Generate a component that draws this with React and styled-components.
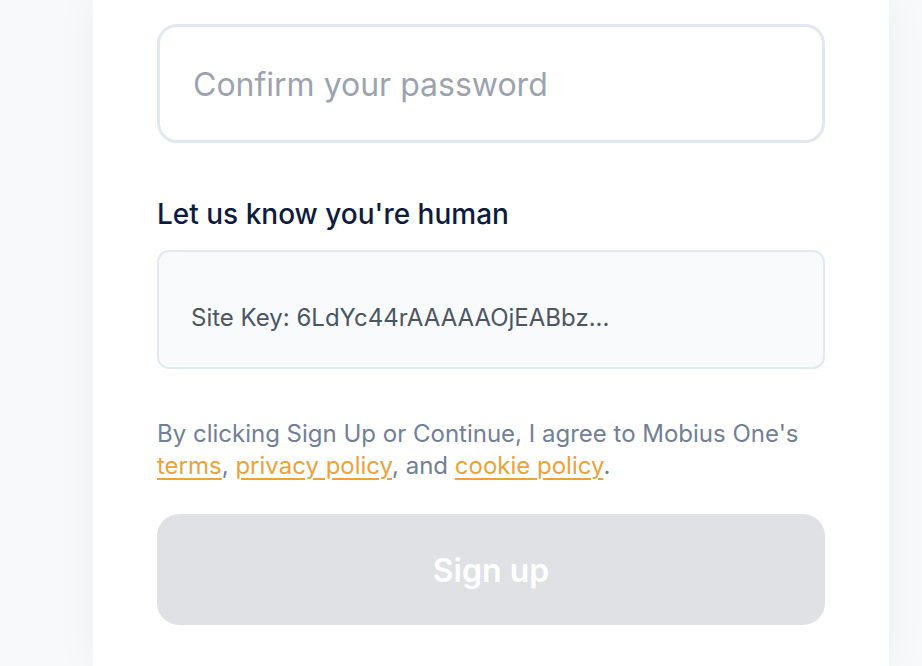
import React from "react";
import styled, { createGlobalStyle } from "styled-components";

const Global = createGlobalStyle`
  html, body { margin: 0; padding: 0; }
  body {
    background: #f8f9fb;
    font-family: Inter, "Noto Sans", sans-serif;
    -webkit-font-smoothing: antialiased;
  }
`;

const Page = styled.div`
  display: flex;
  height: 666px;
  overflow: hidden;
  padding-left: 93px;
  padding-right: 33px;
  box-sizing: border-box;
`;

const Card = styled.div`
  flex: 1;
  background: #ffffff;
  box-shadow: 0 0 40px rgba(15, 23, 42, 0.05);
  padding: 24px 64px 0 64px;
  display: flex;
  flex-direction: column;
  box-sizing: border-box;
`;

const Input = styled.input`
  height: 119px;
  flex-shrink: 0;
  box-sizing: border-box;
  border: 3px solid #e2e8f0;
  border-radius: 20px;
  padding: 2px 33px 0 33px;
  font-family: Inter, sans-serif;
  font-size: 32px;
  color: #111827;
  background: #fff;
  outline: none;
  &::placeholder { color: #9ca3af; }
`;

const Label = styled.div`
  margin-top: 55px;
  font-size: 28px;
  line-height: 32px;
  font-weight: 500;
  color: #0f1b3d;
`;

const Captcha = styled.div`
  margin-top: 20px;
  height: 119px;
  flex-shrink: 0;
  box-sizing: border-box;
  border: 2px solid #e2e8f0;
  border-radius: 12px;
  background: #f9fafc;
  padding: 16px 32px 0 32px;
  display: flex;
  align-items: center;
  font-size: 24px;
  color: #4b5563;
`;

const Terms = styled.p`
  margin: 49px 0 0 0;
  font-size: 24px;
  line-height: 32px;
  color: #718096;
`;

const Link = styled.a`
  color: #eba23c;
  text-decoration: underline;
  text-underline-offset: 4px;
  text-decoration-thickness: 1.5px;
`;

const Button = styled.button`
  margin-top: 32px;
  height: 111px;
  flex-shrink: 0;
  border: none;
  border-radius: 22px;
  background: #e0e1e5;
  color: #ffffff;
  font-family: Inter, sans-serif;
  font-size: 32px;
  font-weight: 600;
  padding-top: 2px;
  cursor: not-allowed;
`;

export default function App() {
  return (
    <>
      <Global />
      <Page>
        <Card>
          <Input type="password" placeholder="Confirm your password" />
          <Label>Let us know you're human</Label>
          <Captcha>Site Key: 6LdYc44rAAAAAOjEABbz...</Captcha>
          <Terms>
            By clicking Sign Up or Continue, I agree to Mobius One's{" "}
            <Link href="#">terms</Link>, <Link href="#">privacy policy</Link>, and{" "}
            <Link href="#">cookie policy</Link>.
          </Terms>
          <Button disabled>Sign up</Button>
        </Card>
      </Page>
    </>
  );
}
